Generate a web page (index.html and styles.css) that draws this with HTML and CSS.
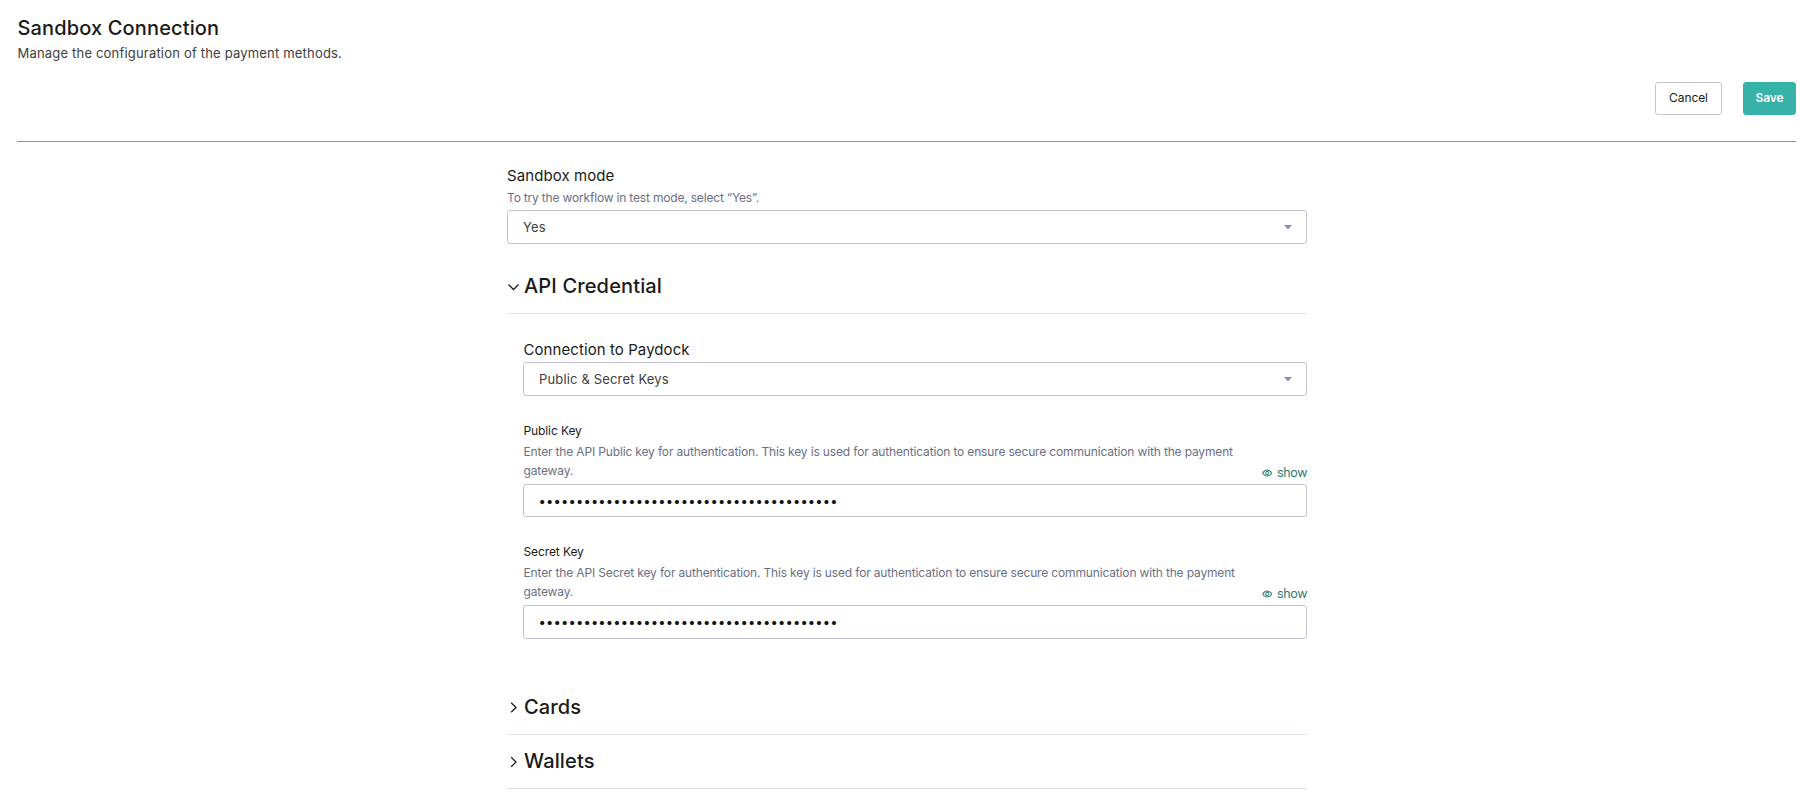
FILE: index.html
```html
<!DOCTYPE html>
<html lang="en">
<head>
<meta charset="utf-8">
<title>Sandbox Connection</title>
<link rel="stylesheet" href="styles.css">
</head>
<body>
<header class="page-header">
  <h1 class="page-title"><span>Sandbox Connection</span></h1>
  <p class="page-subtitle"><span>Manage the configuration of the payment methods.</span></p>
  <div class="actions">
    <button class="btn btn-cancel">Cancel</button>
    <button class="btn btn-save">Save</button>
  </div>
</header>
<main class="form">
  <div class="field">
    <div class="label">Sandbox mode</div>
    <div class="help help-single">To try the workflow in test mode, select “Yes”.</div>
    <div class="control"><span>Yes</span><svg class="caret" viewBox="0 0 8 5"><path d="M0 0h8L4 4.5z"/></svg></div>
  </div>
  <section>
    <h2 class="section-head section-open"><svg class="chevron" viewBox="0 0 12 12"><path d="M1.500 3.500 6.500 8.500l5-5"/></svg><span>API Credential</span></h2>
    <div class="section-body">
      <div class="label">Connection to Paydock</div>
      <div class="control control-keys"><span>Public &amp; Secret Keys</span><svg class="caret" viewBox="0 0 8 5"><path d="M0 0h8L4 4.5z"/></svg></div>
      <div class="key">
        <div class="key-label">Public Key</div>
        <div class="key-row">
          <div class="help">Enter the API Public key for authentication. This key is used for authentication to ensure secure communication with the payment<br>gateway.</div>
          <a class="show"><svg class="eye" viewBox="0 0 11 8"><path d="M.7 4C2 1.8 3.6.8 5.5.8S9 1.8 10.3 4C9 6.200 7.400 7.200 5.500 7.200S2 6.200.7 4z"/><circle cx="5.500" cy="4" r="1.700"/></svg><span>show</span></a>
        </div>
        <div class="control secret secret-public"><span class="dots">••••••••••••••••••••••••••••••••••••••••</span></div>
      </div>
      <div class="key key-second">
        <div class="key-label">Secret Key</div>
        <div class="key-row">
          <div class="help">Enter the API Secret key for authentication. This key is used for authentication to ensure secure communication with the payment<br>gateway.</div>
          <a class="show"><svg class="eye" viewBox="0 0 11 8"><path d="M.7 4C2 1.8 3.6.8 5.5.8S9 1.8 10.3 4C9 6.200 7.400 7.200 5.500 7.200S2 6.200.7 4z"/><circle cx="5.500" cy="4" r="1.700"/></svg><span>show</span></a>
        </div>
        <div class="control secret"><span class="dots">••••••••••••••••••••••••••••••••••••••••</span></div>
      </div>
    </div>
  </section>
  <h2 class="section-head section-cards"><svg class="chevron" viewBox="0 0 12 12"><path d="M4.200.7 9 5.500l-4.800 4.800"/></svg><span>Cards</span></h2>
  <h2 class="section-head section-wallets"><svg class="chevron" viewBox="0 0 12 12"><path d="M4.200 1.200 9 6l-4.800 4.800"/></svg><span>Wallets</span></h2>
</main>
</body>
</html>
```
FILE: styles.css
```css
* { box-sizing: border-box; margin: 0; padding: 0; }
body { background: #fff; color: #1a1a1a; font-family: Inter, "Liberation Sans", sans-serif; font-size: 13px; }
.page-header { height: 142px; margin: 0 4px 0 17px; padding-top: 16px; border-bottom: 1px solid #8c9196; }
.page-title { padding-left: .5px; font-size: 20px; line-height: 24px; font-weight: 500; letter-spacing: .14px; }
.page-subtitle { margin-top: 3px; padding-left: .5px; font-size: 13px; line-height: 20px; letter-spacing: .19px; color: #404040; }
.actions { display: flex; justify-content: flex-end; gap: 21px; margin-top: 19px; }
.btn { height: 33px; padding-bottom: 2px; border-radius: 3px; font: 400 12px/29px Inter, sans-serif; letter-spacing: -.1px; text-align: center; }
.btn-cancel { width: 67px; border: 1px solid #c3c2d6; background: #fff; color: #1a1a1a; }
.btn-save { width: 53px; border: 1px solid #36b2a8; background: #36b2a8; color: #fff; font-weight: 600; }
.form { width: 800px; margin: 24px 0 0 507px; }
.label { font-size: 15px; line-height: 20px; letter-spacing: .08px; }
.help { font-size: 12px; line-height: 18.5px; letter-spacing: -.155px; color: #6a6f86; }
.help-single { margin-top: 3px; line-height: 18px; letter-spacing: -.18px; }
.control { display: flex; align-items: center; justify-content: space-between; height: 34px; margin-top: 3px; padding: 0 14px 0 15px; border: 1px solid #c3c2d6; border-radius: 3px; font-size: 13px; letter-spacing: .16px; color: #404040; }
.caret { width: 8px; height: 5px; fill: #8a8fb0; }
.section-head { display: flex; align-items: center; height: 54px; gap: 5px; border-bottom: 1px solid #dfe0eb; font-size: 20px; line-height: 24px; font-weight: 500; letter-spacing: .15px; }
.section-head span { padding-bottom: 2px; }
.section-open { margin-top: 16px; }
.chevron { width: 12px; height: 12px; fill: none; stroke: #1a1a1a; stroke-width: 1.3; overflow: visible; }
.section-body { padding: 26px 0 0 16px; }
.section-body .label { padding-left: .5px; }
.control-keys { margin-top: 2px; }
.key { height: 97px; margin-top: 26px; }
.key-second { margin-top: 24px; }
.key-label { padding-left: .5px; font-size: 12px; line-height: 18px; letter-spacing: -.1px; }
.key-row { display: flex; justify-content: space-between; height: 41px; margin-top: 3px; padding-left: .5px; }
.show { display: flex; align-items: center; gap: 5px; height: 20px; margin-top: 20px; font-size: 12.5px; line-height: 20px; letter-spacing: -.4px; color: #2a7a70; }
.eye { width: 10.5px; height: 8px; fill: none; stroke: #36857c; stroke-width: 1.1; }
.secret { height: 34px; margin-top: 0; padding-left: 14.5px; }
.secret-public { height: 33px; }
.dots { color: #111; letter-spacing: .17px; }
.section-cards { margin-top: 41px; }
```
